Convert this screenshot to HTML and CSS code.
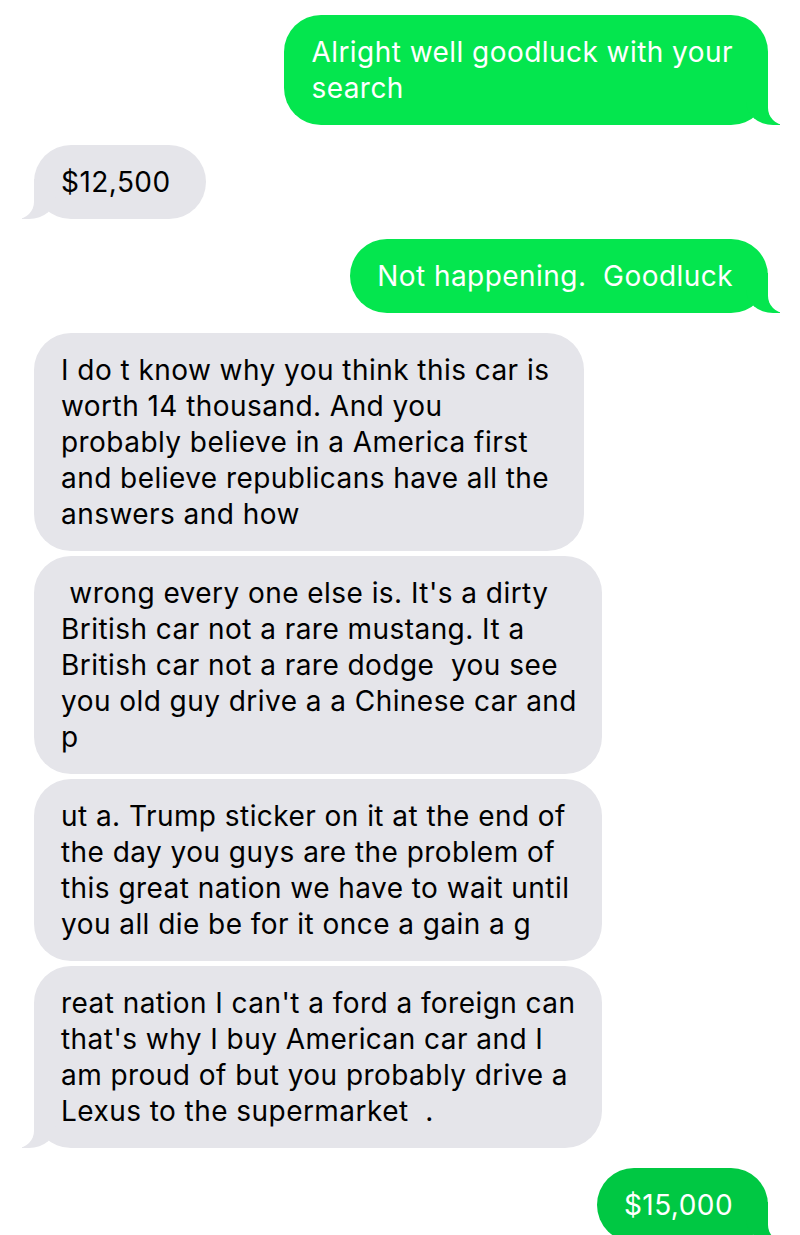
FILE: index.html
```html
<!DOCTYPE html>
<html>
<head>
<meta charset="utf-8">
<link rel="stylesheet" href="styles.css">
</head>
<body>
<div class="thread">
  <div class="bubble out tail">Alright well goodluck with your<br>search</div>
  <div class="bubble in tail">$12,500</div>
  <div class="bubble out tail">Not happening.&nbsp; Goodluck</div>
  <div class="group">
    <div class="bubble in">I do t know why you think this car is<br>worth 14 thousand. And you<br>probably believe in a America first<br>and believe republicans have all the<br>answers and how</div>
    <div class="bubble in">&nbsp;wrong every one else is. It's a dirty<br>British car not a rare mustang. It a<br>British car not a rare dodge&nbsp; you see<br>you old guy drive a a Chinese car and<br>p</div>
    <div class="bubble in">ut a. Trump sticker on it at the end of<br>the day you guys are the problem of<br>this great nation we have to wait until<br>you all die be for it once a gain a g</div>
    <div class="bubble in tail">reat nation I can't a ford a foreign can<br>that's why I buy American car and I<br>am proud of but you probably drive a<br>Lexus to the supermarket&nbsp; .</div>
  </div>
  <div class="bubble out tail last">$15,000</div>
</div>
</body>
</html>
```
FILE: styles.css
```css
html, body {
  margin: 0;
  padding: 0;
  background: #ffffff;
  height: 1235px;
  overflow: hidden;
}

.thread {
  display: flex;
  flex-direction: column;
  gap: 20px;
  padding: 15px 32px 0 34px;
  font-family: Inter, "Liberation Sans", Arial, sans-serif;
  font-size: 28px;
  line-height: 36px;
  letter-spacing: 0.45px;
}

.group {
  display: flex;
  flex-direction: column;
  gap: 5px;
}

.bubble {
  position: relative;
  box-sizing: border-box;
  max-width: 568px;
  padding: 19px 35px 19px 27px;
  border-radius: 37px;
  white-space: nowrap;
}

.bubble.in {
  align-self: flex-start;
  background: #e5e5ea;
  color: #000000;
}

.bubble.out {
  align-self: flex-end;
  background: #04e64e;
  color: #ffffff;
}

.bubble.out.last {
  background: #00c843;
}

.bubble.tail::before,
.bubble.tail::after {
  content: "";
  position: absolute;
  bottom: 0;
  height: 40px;
}

.bubble.out.tail::before {
  right: -12px;
  width: 34px;
  background: inherit;
  border-bottom-left-radius: 27px 23px;
}

.bubble.out.tail::after {
  right: -44px;
  width: 44px;
  background: #ffffff;
  border-bottom-left-radius: 17px;
}

.bubble.in.tail::before {
  left: -12px;
  width: 34px;
  background: inherit;
  border-bottom-right-radius: 27px 23px;
}

.bubble.in.tail::after {
  left: -44px;
  width: 44px;
  background: #ffffff;
  border-bottom-right-radius: 17px;
}
```
